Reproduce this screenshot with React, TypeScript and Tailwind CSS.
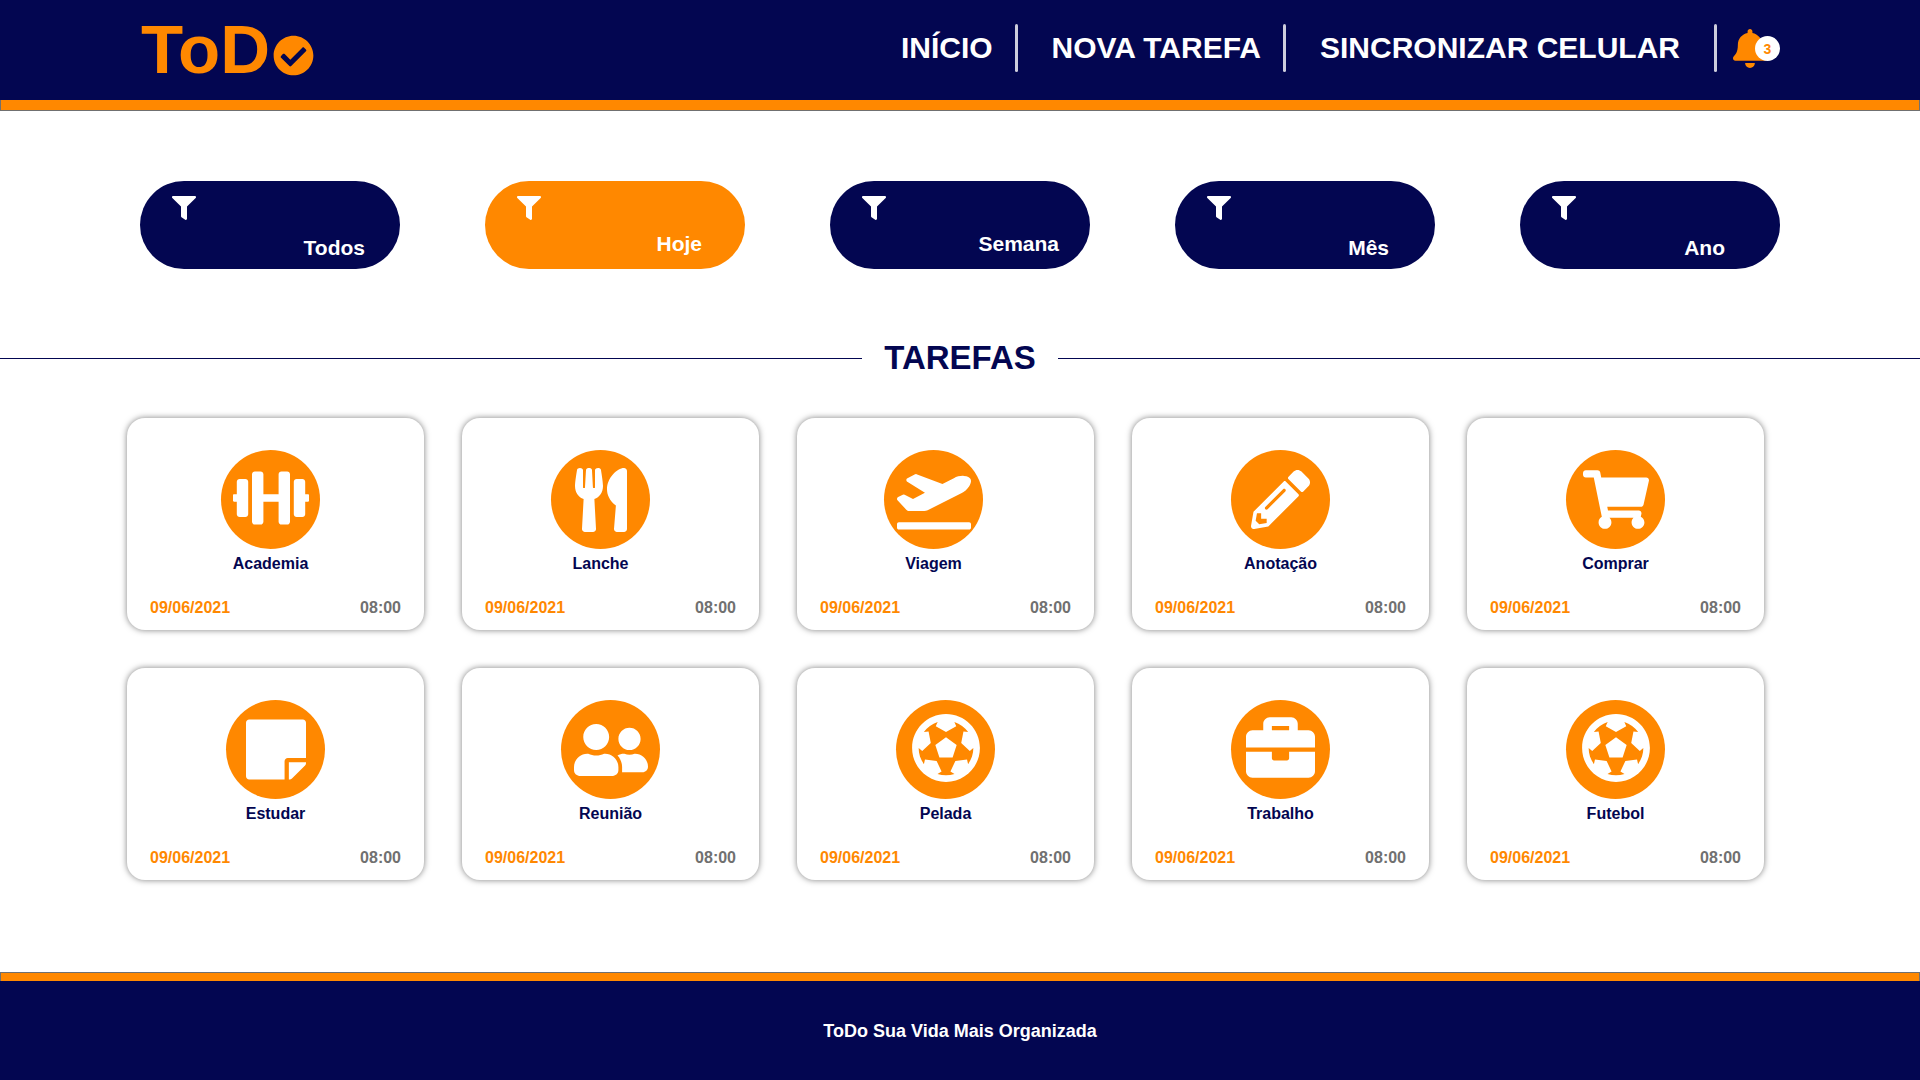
import type { IconType } from "react-icons";
import {
  FaBell,
  FaBriefcase,
  FaCheckCircle,
  FaDumbbell,
  FaFilter,
  FaFutbol,
  FaPencilAlt,
  FaPlaneDeparture,
  FaShoppingCart,
  FaStickyNote,
  FaUserFriends,
  FaUtensils,
} from "react-icons/fa";

const filters = [
  { label: "Todos", active: false, inset: "pr-[35px] pb-[9px]" },
  { label: "Hoje", active: true, inset: "pr-[43px] pb-[13px]" },
  { label: "Semana", active: false, inset: "pr-[31px] pb-[13px]" },
  { label: "Mês", active: false, inset: "pr-[46px] pb-[9px]" },
  { label: "Ano", active: false, inset: "pr-[55px] pb-[9px]" },
];

type Task = { title: string; icon: IconType; size: string; inset?: string };

const tasks: Task[] = [
  { title: "Academia", icon: FaDumbbell, size: "mb-1 w-[76px] h-[62px]", inset: "pr-2.5" },
  { title: "Lanche", icon: FaUtensils, size: "w-[52px] h-[64px]", inset: "pr-5" },
  { title: "Viagem", icon: FaPlaneDeparture, size: "w-[74px] h-[60px]", inset: "pr-6" },
  { title: "Anotação", icon: FaPencilAlt, size: "w-[59px] h-[59px]" },
  { title: "Comprar", icon: FaShoppingCart, size: "w-[66px] h-[59px]" },
  { title: "Estudar", icon: FaStickyNote, size: "w-[60px] h-[69px]" },
  { title: "Reunião", icon: FaUserFriends, size: "w-[74px] h-[60px]" },
  { title: "Pelada", icon: FaFutbol, size: "mb-1 w-[70px] h-[70px]" },
  { title: "Trabalho", icon: FaBriefcase, size: "mb-1 w-[69px] h-[69px]" },
  { title: "Futebol", icon: FaFutbol, size: "mb-1 w-[70px] h-[70px]" },
];

function Divider() {
  return <span className="h-12 w-[3px] rounded-full bg-[#cdcddc]" />;
}

function Header() {
  return (
    <header>
      <div className="flex h-[100px] items-start justify-between bg-[#030651] px-[140px]">
        <a href="#inicio" aria-label="ToDo" className="flex h-[100px] items-center pl-px text-[#ff8800]">
          <span className="text-[69px] leading-[96px] font-bold">ToD</span>
          <FaCheckCircle className="mt-[10px] ml-[3px] size-[41px]" />
        </a>
        <nav className="flex h-24 items-center text-[30px] leading-9 font-bold text-white">
          <a href="#inicio" className="pr-[22px]">INÍCIO</a>
          <Divider />
          <a href="#nova" className="pr-[22px] pl-[34px]">NOVA TAREFA</a>
          <Divider />
          <a href="#sincronizar" className="px-[34px]">SINCRONIZAR CELULAR</a>
          <Divider />
          <button type="button" aria-label="Notificações" className="relative ml-4 h-10 w-[47px]">
            <FaBell className="h-[39px] w-[34px] text-[#ff8800]" />
            <span className="absolute top-2 right-0 flex size-[25px] items-center justify-center rounded-full bg-white text-sm leading-none font-bold text-[#ff8800]">
              3
            </span>
          </button>
        </nav>
      </div>
      <div className="h-[11px] border-x border-b border-[#707070] bg-[#ff8800]" />
    </header>
  );
}

function FilterButton({ label, active, inset }: (typeof filters)[number]) {
  return (
    <button
      type="button"
      aria-pressed={active}
      className={`flex h-[88px] items-start justify-between rounded-full pt-[15px] pl-8 text-white ${
        active ? "bg-[#ff8800]" : "bg-[#030651]"
      }`}
    >
      <FaFilter className="size-6" />
      <span className={`self-end text-[21px] leading-6 font-bold ${inset}`}>{label}</span>
    </button>
  );
}

function TaskCard({ title, icon: Icon, size, inset = "" }: Task) {
  return (
    <article className="flex h-[212px] flex-col rounded-[18px] bg-white px-[23px] pt-8 pb-3 text-base leading-5 font-bold shadow-[0_0_6px_rgba(0,0,0,0.5)]">
      <div className={`flex flex-col items-center ${inset}`}>
        <div className="flex size-[99px] items-center justify-center rounded-full bg-[#ff8800] text-white">
          <Icon className={size} />
        </div>
        <h2 className="mt-[5px] text-[#030651]">{title}</h2>
      </div>
      <div className="mt-auto flex justify-between">
        <span className="text-[#ff8800]">09/06/2021</span>
        <span className="text-[#707070]">08:00</span>
      </div>
    </article>
  );
}

export default function App() {
  return (
    <div className="flex min-h-screen flex-col bg-white font-['Liberation_Sans',Arial,sans-serif]">
      <Header />
      <main className="pb-10">
        <div className="grid grid-cols-5 gap-[85px] px-[140px] pt-[70px]">
          {filters.map((f) => (
            <FilterButton key={f.label} {...f} />
          ))}
        </div>
        <div className="mt-[69px] flex items-center gap-[22px]">
          <span className="h-px flex-1 bg-[#030651]" />
          <h1 className="text-[33px] leading-10 font-bold text-[#030651]">TAREFAS</h1>
          <span className="h-px flex-1 bg-[#030651]" />
        </div>
        <div className="mt-10 grid grid-cols-5 gap-[38px] pr-[156px] pl-[127px]">
          {tasks.map((t) => (
            <TaskCard key={t.title} {...t} />
          ))}
        </div>
      </main>
      <footer className="mt-auto">
        <div className="h-[9px] border-x border-t border-[#707070] bg-[#ff8800]" />
        <div className="flex h-[99px] items-center justify-center bg-[#030651] text-lg leading-6 font-bold text-white">
          ToDo Sua Vida Mais Organizada
        </div>
      </footer>
    </div>
  );
}
